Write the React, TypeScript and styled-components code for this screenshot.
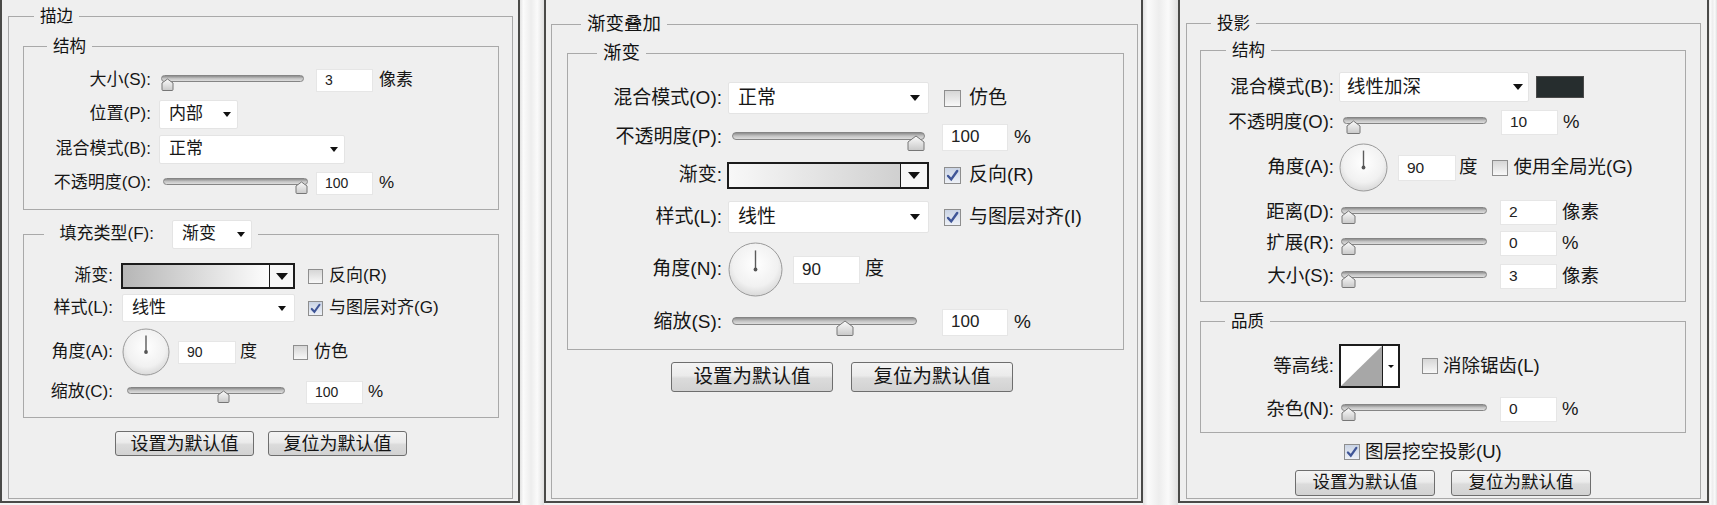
import React, { useId } from 'react';
import styled, { createGlobalStyle } from 'styled-components';

const GlobalStyle = createGlobalStyle`
  html, body {
    margin: 0;
    padding: 0;
  }
  body {
    background: #f3f3f3;
    font-family: "Liberation Sans", "Noto Sans CJK SC", sans-serif;
    color: #161616;
  }
`;

const Screen = styled.div`
  display: flex;
  width: 1717px;
  height: 505px;
  overflow: hidden;
`;

const Gutter = styled.div<{ $w?: number }>`
  flex: ${p => (p.$w ? `0 0 ${p.$w}px` : '1')};
  background: linear-gradient(to right, #e2e2e2 0, #fbfbfb 14%, #ededed 46%, #fafafa 72%, #e0e0e0 100%);
`;

const Panel = styled.section<{ $w: number; $pad: string; $fs: number }>`
  box-sizing: border-box;
  flex: 0 0 ${p => p.$w}px;
  height: 503px;
  display: flex;
  flex-direction: column;
  padding: ${p => p.$pad};
  border: 2px solid #4a4a48;
  border-top: none;
  background: #efefef;
  font-size: ${p => p.$fs}px;
  line-height: 1.2;
`;

const Group = styled.fieldset<{ $pad: string; $mt?: number; $grow?: boolean }>`
  display: flex;
  flex-direction: column;
  min-width: 0;
  margin: ${p => p.$mt ?? 0}px 0 0;
  padding: ${p => p.$pad};
  border: 1px solid #a9a9a9;
  ${p => (p.$grow ? 'flex: 1;' : '')}
`;

const Caption = styled.legend<{ $fs: number; $lh: number; $ml: number }>`
  margin-left: ${p => p.$ml}px;
  padding: 0 6px;
  font-size: ${p => p.$fs}px;
  line-height: ${p => p.$lh}px;
  color: #111;
`;

const CaptionBar = styled.legend<{ $ml: number; $pl: number }>`
  display: flex;
  align-items: center;
  margin-left: ${p => p.$ml}px;
  padding: 0 6px 0 ${p => p.$pl}px;
  white-space: nowrap;
`;

const CaptionText = styled.span<{ $w: number }>`
  width: ${p => p.$w}px;
  text-align: right;
`;

const Row = styled.div<{ $h: number; $mt?: number; $ml?: number }>`
  display: flex;
  align-items: center;
  height: ${p => p.$h}px;
  margin-top: ${p => p.$mt ?? 0}px;
  margin-left: ${p => p.$ml ?? 0}px;
  white-space: nowrap;
`;

const Label = styled.span<{ $w: number }>`
  flex: 0 0 ${p => p.$w}px;
  text-align: right;
`;

const Unit = styled.span<{ $ml: number }>`
  margin-left: ${p => p.$ml}px;
`;

const Select = styled.div<{ $w: number; $h: number; $ml: number; $pl: number; $pr: number }>`
  box-sizing: border-box;
  flex: 0 0 ${p => p.$w}px;
  height: ${p => p.$h}px;
  margin-left: ${p => p.$ml}px;
  padding: 0 ${p => p.$pr}px 0 ${p => p.$pl}px;
  display: flex;
  align-items: center;
  justify-content: space-between;
  background: #fff;
  border: 1px solid #e4e4e4;
  border-radius: 2px;
`;

const Caret = styled.span<{ $s: number }>`
  width: 0;
  height: 0;
  border-left: ${p => p.$s}px solid transparent;
  border-right: ${p => p.$s}px solid transparent;
  border-top: ${p => Math.round(p.$s * 1.1)}px solid #111;
`;

const Field = styled.input<{ $w: number; $h: number; $ml: number; $fs: number }>`
  box-sizing: border-box;
  flex: 0 0 ${p => p.$w}px;
  width: ${p => p.$w}px;
  height: ${p => p.$h}px;
  margin: 0 0 0 ${p => p.$ml}px;
  padding: 0 0 0 8px;
  border: 1px solid #e6e6e6;
  background: #fff;
  font-family: "Liberation Sans", sans-serif;
  font-size: ${p => p.$fs}px;
  color: #222;
  outline: none;
`;

const SliderBox = styled.div<{ $w: number; $h: number; $ml: number }>`
  position: relative;
  flex: 0 0 ${p => p.$w}px;
  height: ${p => p.$h}px;
  margin: ${p => p.$h - 10}px 0 0 ${p => p.$ml}px;
`;

const Track = styled.div<{ $h: number }>`
  box-sizing: border-box;
  height: ${p => p.$h}px;
  border: 1px solid #858585;
  border-radius: 4px;
  background: linear-gradient(#8d8d8d, #c3c3c3 50%, #dedede);
`;

const Knob = styled.svg`
  position: absolute;
  top: 3px;
`;

const DialSvg = styled.svg<{ $ml: number }>`
  flex-shrink: 0;
  margin-left: ${p => p.$ml}px;
`;

const GradientBar = styled.div<{ $w: number; $h: number; $ml: number }>`
  box-sizing: border-box;
  display: flex;
  flex: 0 0 ${p => p.$w}px;
  height: ${p => p.$h}px;
  margin-left: ${p => p.$ml}px;
  border: 2px solid #1c1c1c;
`;

const GradientFill = styled.div<{ $from: string; $to: string }>`
  flex: 1;
  background: linear-gradient(to right, ${p => p.$from}, ${p => p.$to});
`;

const DropPart = styled.div<{ $w: number }>`
  flex: 0 0 ${p => p.$w}px;
  display: flex;
  align-items: center;
  justify-content: center;
  border-left: 1px solid #1c1c1c;
  background: #f7f7f7;
`;

const Box = styled.span<{ $s: number; $ml: number; $on?: boolean }>`
  box-sizing: border-box;
  flex: 0 0 ${p => p.$s}px;
  height: ${p => p.$s}px;
  margin-left: ${p => p.$ml}px;
  display: flex;
  align-items: center;
  justify-content: center;
  border: 1px solid #8e8e8e;
  background: ${p => (p.$on ? 'linear-gradient(#c9d3e4, #eef1f7)' : 'linear-gradient(#d6d6d6, #f8f8f8)')};
`;

const CheckText = styled.span<{ $ml: number }>`
  margin-left: ${p => p.$ml}px;
`;

const Swatch = styled.div<{ $w: number; $h: number; $ml: number }>`
  flex: 0 0 ${p => p.$w}px;
  height: ${p => p.$h}px;
  margin-left: ${p => p.$ml}px;
  background: #262d2e;
  border: 1px solid #4a4a4a;
  box-sizing: border-box;
`;

const ContourBox = styled.div<{ $ml: number }>`
  box-sizing: border-box;
  display: flex;
  flex: 0 0 60px;
  height: 44px;
  margin-left: ${p => p.$ml}px;
  border: 2px solid #1c1c1c;
  background: #fff;
`;

const ContourArrow = styled.div`
  flex: 0 0 15px;
  display: flex;
  align-items: center;
  justify-content: center;
  border-left: 1px solid #1c1c1c;
  background: #fff;
`;

const Buttons = styled.div<{ $mt: number; $gap: number; $mr?: number }>`
  display: flex;
  justify-content: center;
  gap: ${p => p.$gap}px;
  margin: ${p => p.$mt}px ${p => p.$mr ?? 0}px 0 0;
`;

const Button = styled.button<{ $w: number; $h: number; $fs: number }>`
  width: ${p => p.$w}px;
  height: ${p => p.$h}px;
  padding: 0;
  font-family: inherit;
  font-size: ${p => p.$fs}px;
  line-height: 1;
  color: #141414;
  border: 1px solid #6e6e6e;
  border-radius: 3px;
  background: linear-gradient(#f4f4f4, #ebebeb 45%, #dbdbdb 55%, #d2d2d2);
`;

type SliderProps = { w: number; ml: number; value: number; tw: number; th: number; track?: number };

const Slider = ({ w, ml, value, tw, th, track = 7 }: SliderProps) => {
  const id = useId();
  const left = Math.round(value * (w - tw));
  const shoulder = Math.round(th * 0.42);
  return (
    <SliderBox $w={w} $h={th + 3} $ml={ml}>
      <Track $h={track} />
      <Knob width={tw} height={th} viewBox={`0 0 ${tw} ${th}`} style={{ left }}>
        <defs>
          <linearGradient id={id} x1="0" y1="0" x2="0" y2="1">
            <stop offset="0" stopColor="#fbfbfb" />
            <stop offset="1" stopColor="#c9c9c9" />
          </linearGradient>
        </defs>
        <path
          d={`M1 ${shoulder} L${tw / 2} 1 L${tw - 1} ${shoulder} L${tw - 1} ${th - 1.5} Q${tw - 1} ${th - 0.5} ${tw - 2} ${th - 0.5} L2 ${th - 0.5} Q1 ${th - 0.5} 1 ${th - 1.5} Z`}
          fill={`url(#${id})`}
          stroke="#767676"
          strokeWidth="1"
          strokeLinejoin="round"
        />
      </Knob>
    </SliderBox>
  );
};

const Dial = ({ size, ml }: { size: number; ml: number }) => {
  const id = useId();
  const c = size / 2;
  const r = c - 1;
  return (
    <DialSvg $ml={ml} width={size} height={size} viewBox={`0 0 ${size} ${size}`}>
      <defs>
        <radialGradient id={id} cx="50%" cy="40%" r="60%">
          <stop offset="0" stopColor="#ffffff" />
          <stop offset="0.7" stopColor="#f1f1f1" />
          <stop offset="1" stopColor="#d9d9d9" />
        </radialGradient>
      </defs>
      <circle cx={c} cy={c} r={r} fill={`url(#${id})`} stroke="#9a9a9a" strokeWidth="1" />
      <line x1={c} y1={c} x2={c} y2={c - r * 0.72} stroke="#5b5b5b" strokeWidth="1.4" />
      <circle cx={c} cy={c} r="1.9" fill="#555" />
    </DialSvg>
  );
};

const Tick = ({ s }: { s: number }) => (
  <svg width={s - 4} height={s - 4} viewBox="0 0 10 10">
    <path d="M1.6 5.4 L4 8 L8.6 1.6" fill="none" stroke="#3f5597" strokeWidth="1.9" strokeLinecap="round" />
  </svg>
);

const Check = ({ s, ml, on, gap, children }: { s: number; ml: number; on?: boolean; gap: number; children: React.ReactNode }) => (
  <>
    <Box $s={s} $ml={ml} $on={on}>{on && <Tick s={s} />}</Box>
    <CheckText $ml={gap}>{children}</CheckText>
  </>
);

const Contour = ({ ml }: { ml: number }) => (
  <ContourBox $ml={ml}>
    <svg width="41" height="40" viewBox="0 0 41 40" preserveAspectRatio="none">
      <polygon points="0,40 41,0 41,40" fill="#a7a7a7" />
    </svg>
    <ContourArrow>
      <Caret $s={3} />
    </ContourArrow>
  </ContourBox>
);

const StrokePanel = () => (
  <Panel $w={520} $pad="5px 5px 2px 6px" $fs={17}>
    <Group $pad="9px 13px 0 14px" $grow>
      <Caption $fs={16.5} $lh={22} $ml={11}>描边</Caption>
      <Group $pad="9px 0 11px 0">
        <Caption $fs={16.5} $lh={20} $ml={23}>结构</Caption>
        <Row $h={30}>
          <Label $w={127}>大小(S):</Label>
          <Slider w={143} ml={10} value={0} tw={13} th={13} />
          <Field readOnly value="3" $w={57} $h={23} $ml={12} $fs={14} />
          <Unit $ml={6}>像素</Unit>
        </Row>
        <Row $h={30} $mt={4}>
          <Label $w={127}>位置(P):</Label>
          <Select $w={79} $h={29} $ml={8} $pl={9} $pr={6}>内部<Caret $s={4.5} /></Select>
        </Row>
        <Row $h={30} $mt={5}>
          <Label $w={127}>混合模式(B):</Label>
          <Select $w={186} $h={29} $ml={8} $pl={9} $pr={6}>正常<Caret $s={4.5} /></Select>
        </Row>
        <Row $h={30} $mt={4}>
          <Label $w={127}>不透明度(O):</Label>
          <Slider w={145} ml={12} value={1} tw={13} th={13} />
          <Field readOnly value="100" $w={57} $h={23} $ml={8} $fs={14} />
          <Unit $ml={6}>%</Unit>
        </Row>
      </Group>
      <Group $pad="14px 0 12px 0" $mt={10}>
        <CaptionBar $ml={20} $pl={6}>
          <CaptionText $w={104}>填充类型(F):</CaptionText>
          <Select $w={80} $h={29} $ml={18} $pl={9} $pr={6}>渐变<Caret $s={4.5} /></Select>
        </CaptionBar>
        <Row $h={26}>
          <Label $w={89}>渐变:</Label>
          <GradientBar $w={174} $h={26} $ml={8}>
            <GradientFill $from="#b6b6b6" $to="#fdfdfd" />
            <DropPart $w={23}><Caret $s={6} /></DropPart>
          </GradientBar>
          <Check s={15} ml={13} gap={6}>反向(R)</Check>
        </Row>
        <Row $h={28} $mt={5}>
          <Label $w={89}>样式(L):</Label>
          <Select $w={173} $h={28} $ml={9} $pl={9} $pr={8}>线性<Caret $s={4.5} /></Select>
          <Check s={15} ml={13} gap={6} on>与图层对齐(G)</Check>
        </Row>
        <Row $h={48} $mt={6}>
          <Label $w={89}>角度(A):</Label>
          <Dial size={48} ml={9} />
          <Field readOnly value="90" $w={58} $h={23} $ml={8} $fs={14} />
          <Unit $ml={4}>度</Unit>
          <Check s={15} ml={36} gap={6}>仿色</Check>
        </Row>
        <Row $h={26} $mt={3}>
          <Label $w={89}>缩放(C):</Label>
          <Slider w={158} ml={14} value={0.62} tw={13} th={13} />
          <Field readOnly value="100" $w={57} $h={23} $ml={21} $fs={14} />
          <Unit $ml={5}>%</Unit>
        </Row>
      </Group>
      <Buttons $mt={13} $gap={14}>
        <Button $w={139} $h={25} $fs={18}>设置为默认值</Button>
        <Button $w={139} $h={25} $fs={18}>复位为默认值</Button>
      </Buttons>
    </Group>
  </Panel>
);

const GradientOverlayPanel = () => (
  <Panel $w={599} $pad="12px 3px 2px 5px" $fs={19}>
    <Group $pad="5px 13px 0 15px" $grow>
      <Caption $fs={18.5} $lh={24} $ml={14}>渐变叠加</Caption>
      <Group $pad="17px 0 13px 0">
        <Caption $fs={18.5} $lh={24} $ml={29}>渐变</Caption>
        <Row $h={32}>
          <Label $w={154}>混合模式(O):</Label>
          <Select $w={201} $h={32} $ml={6} $pl={9} $pr={8}>正常<Caret $s={5.5} /></Select>
          <Check s={17} ml={15} gap={8}>仿色</Check>
        </Row>
        <Row $h={26} $mt={10}>
          <Label $w={154}>不透明度(P):</Label>
          <Slider w={193} ml={10} value={1} tw={18} th={16} track={8} />
          <Field readOnly value="100" $w={66} $h={27} $ml={17} $fs={17} />
          <Unit $ml={6}>%</Unit>
        </Row>
        <Row $h={27} $mt={12}>
          <Label $w={154}>渐变:</Label>
          <GradientBar $w={202} $h={27} $ml={5}>
            <GradientFill $from="#f8f8f8" $to="#d0d0d0" />
            <DropPart $w={26}><Caret $s={6.5} /></DropPart>
          </GradientBar>
          <Check s={17} ml={15} gap={8} on>反向(R)</Check>
        </Row>
        <Row $h={32} $mt={12}>
          <Label $w={154}>样式(L):</Label>
          <Select $w={201} $h={32} $ml={6} $pl={9} $pr={8}>线性<Caret $s={5.5} /></Select>
          <Check s={17} ml={15} gap={8} on>与图层对齐(I)</Check>
        </Row>
        <Row $h={55} $mt={9}>
          <Label $w={154}>角度(N):</Label>
          <Dial size={55} ml={6} />
          <Field readOnly value="90" $w={67} $h={28} $ml={10} $fs={17} />
          <Unit $ml={5}>度</Unit>
        </Row>
        <Row $h={28} $mt={11}>
          <Label $w={154}>缩放(S):</Label>
          <Slider w={185} ml={10} value={0.62} tw={18} th={16} track={8} />
          <Field readOnly value="100" $w={66} $h={27} $ml={25} $fs={17} />
          <Unit $ml={6}>%</Unit>
        </Row>
      </Group>
      <Buttons $mt={12} $gap={18} $mr={7}>
        <Button $w={162} $h={30} $fs={19.5}>设置为默认值</Button>
        <Button $w={162} $h={30} $fs={19.5}>复位为默认值</Button>
      </Buttons>
    </Group>
  </Panel>
);

const DropShadowPanel = () => (
  <Panel $w={531} $pad="12px 6px 2px 6px" $fs={18.5}>
    <Group $pad="5px 14px 0 13px" $grow>
      <Caption $fs={16.5} $lh={22} $ml={11}>投影</Caption>
      <Group $pad="11px 0 12px 0">
        <Caption $fs={16.5} $lh={22} $ml={25}>结构</Caption>
        <Row $h={30}>
          <Label $w={133}>混合模式(B):</Label>
          <Select $w={190} $h={30} $ml={5} $pl={7} $pr={5}>线性加深<Caret $s={5} /></Select>
          <Swatch $w={48} $h={22} $ml={7} />
        </Row>
        <Row $h={26} $mt={7}>
          <Label $w={133}>不透明度(O):</Label>
          <Slider w={144} ml={9} value={0.02} tw={15} th={14} />
          <Field readOnly value="10" $w={57} $h={25} $ml={14} $fs={15.5} />
          <Unit $ml={5}>%</Unit>
        </Row>
        <Row $h={49} $mt={8}>
          <Label $w={133}>角度(A):</Label>
          <Dial size={49} ml={5} />
          <Field readOnly value="90" $w={58} $h={26} $ml={10} $fs={15.5} />
          <Unit $ml={3}>度</Unit>
          <Check s={16} ml={14} gap={6}>使用全局光(G)</Check>
        </Row>
        <Row $h={26} $mt={7}>
          <Label $w={133}>距离(D):</Label>
          <Slider w={146} ml={7} value={0} tw={15} th={14} />
          <Field readOnly value="2" $w={57} $h={25} $ml={13} $fs={15.5} />
          <Unit $ml={5}>像素</Unit>
        </Row>
        <Row $h={26} $mt={5}>
          <Label $w={133}>扩展(R):</Label>
          <Slider w={146} ml={7} value={0} tw={15} th={14} />
          <Field readOnly value="0" $w={57} $h={25} $ml={13} $fs={15.5} />
          <Unit $ml={5}>%</Unit>
        </Row>
        <Row $h={26} $mt={7}>
          <Label $w={133}>大小(S):</Label>
          <Slider w={146} ml={7} value={0} tw={15} th={14} />
          <Field readOnly value="3" $w={57} $h={25} $ml={13} $fs={15.5} />
          <Unit $ml={5}>像素</Unit>
        </Row>
      </Group>
      <Group $pad="12px 0 10px 0" $mt={8}>
        <Caption $fs={16.5} $lh={22} $ml={24}>品质</Caption>
        <Row $h={44}>
          <Label $w={133}>等高线:</Label>
          <Contour ml={5} />
          <Check s={16} ml={22} gap={5}>消除锯齿(L)</Check>
        </Row>
        <Row $h={26} $mt={8}>
          <Label $w={133}>杂色(N):</Label>
          <Slider w={146} ml={7} value={0} tw={15} th={14} />
          <Field readOnly value="0" $w={57} $h={25} $ml={13} $fs={15.5} />
          <Unit $ml={5}>%</Unit>
        </Row>
      </Group>
      <Row $h={18} $mt={10} $ml={144}>
        <Check s={16} ml={0} gap={5} on>图层挖空投影(U)</Check>
      </Row>
      <Buttons $mt={9} $gap={16}>
        <Button $w={140} $h={26} $fs={17.5}>设置为默认值</Button>
        <Button $w={140} $h={26} $fs={17.5}>复位为默认值</Button>
      </Buttons>
    </Group>
  </Panel>
);

const App = () => {
  return (
    <>
      <GlobalStyle />
      <Screen>
        <StrokePanel />
        <Gutter $w={24} />
        <GradientOverlayPanel />
        <Gutter $w={35} />
        <DropShadowPanel />
        <Gutter />
      </Screen>
    </>
  );
};

export default App;
